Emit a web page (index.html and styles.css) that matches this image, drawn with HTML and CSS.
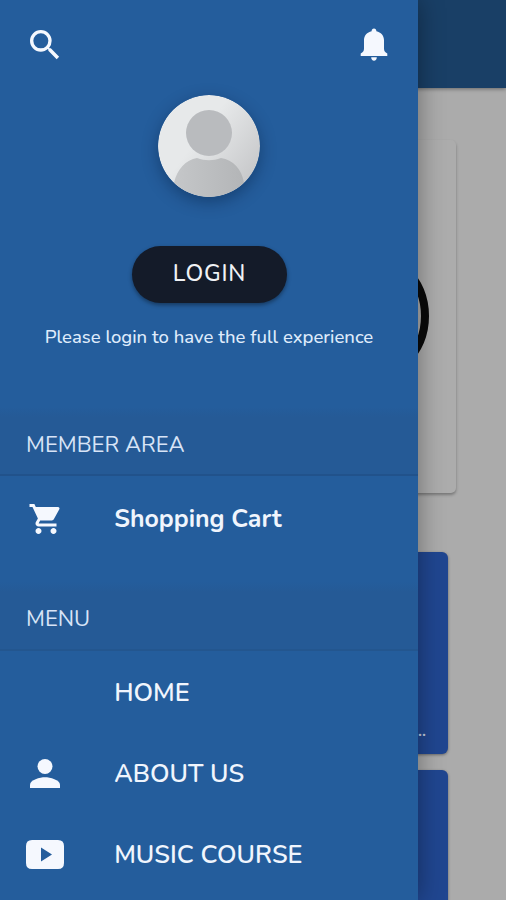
FILE: index.html
```html
<!DOCTYPE html>
<html lang="en">
<head>
<meta charset="utf-8">
<title>Menu</title>
<link rel="stylesheet" href="styles.css">
</head>
<body>
<div class="app">
  <main class="page">
    <header class="topbar"></header>
    <section class="hero-card"><div class="ring"></div></section>
    <section class="tile tile-first"><span class="more">...</span></section>
    <section class="tile"></section>
  </main>
  <aside class="drawer">
    <div class="actions">
      <svg class="icon-search" viewBox="0 0 24 24"><path d="M15.5 14h-.79l-.28-.27A6.47 6.47 0 0 0 16 9.5 6.5 6.5 0 1 0 9.5 16c1.61 0 3.09-.59 4.23-1.57l.27.28v.79l5 4.99L20.49 19l-4.99-5zm-6 0a4.5 4.5 0 1 1 0-9 4.5 4.5 0 0 1 0 9z"/></svg>
      <svg class="icon-bell" viewBox="0 0 28 34"><path d="M14 0.500c1.500 0 2.300 1 2.400 2.700 4.500 1 7.600 4.300 7.600 8.800v8.500c0 2.500 1 3.700 3.300 5V28H.7v-2.500C3 24.200 4 23 4 20.500V12c0-4.500 3.100-7.800 7.600-8.800.1-1.700.9-2.700 2.400-2.700z"/><path d="M11.200 29.300h5.600c0 2-1.200 3.500-2.800 3.500s-2.800-1.500-2.800-3.500z"/></svg>
    </div>
    <svg class="avatar" viewBox="0 0 102 102">
      <defs>
        <linearGradient id="disc" x1="0" y1="0" x2="1" y2=".75"><stop offset=".45" stop-color="#e7e9ea"/><stop offset="1" stop-color="#c6c7c9"/></linearGradient>
        <linearGradient id="body" x1="0" y1="0" x2="1" y2="0"><stop offset="0" stop-color="#c5c7c9"/><stop offset="1" stop-color="#b3b5b7"/></linearGradient>
        <clipPath id="round"><circle cx="51" cy="51" r="51"/></clipPath>
      </defs>
      <g clip-path="url(#round)">
        <rect width="102" height="102" fill="url(#disc)"/>
        <circle cx="51" cy="38" r="23" fill="#b9bbbe"/>
        <path d="M16 102V88C19 74 28 65 39 63c8 3 16 3 24 0 12 2 21 11 23 25v14z" fill="url(#body)"/>
      </g>
    </svg>
    <button class="login">LOGIN</button>
    <p class="hint">Please login to have the full experience</p>
    <h2 class="heading">MEMBER AREA</h2>
    <nav class="group group-member">
      <a class="item"><span class="slot"><svg class="icon-cart" viewBox="0 0 24 24"><path d="M7 18c-1.100 0-1.990.9-1.990 2S5.900 22 7 22s2-.9 2-2-.9-2-2-2zM1 2v2h2l3.600 7.590-1.350 2.450c-.16.280-.25.610-.25.960 0 1.100.9 2 2 2h12v-2H7.420c-.14 0-.25-.11-.25-.25l.03-.12.900-1.630h7.450c.75 0 1.410-.41 1.750-1.030l3.580-6.490A1 1 0 0 0 20 4H5.210l-.94-2H1zm16 16c-1.100 0-1.990.9-1.990 2s.89 2 1.990 2 2-.9 2-2-.9-2-2-2z"/></svg></span><span class="label cart">Shopping Cart</span></a>
    </nav>
    <h2 class="heading heading-menu">MENU</h2>
    <nav class="group group-menu">
      <a class="item"><span class="slot"></span><span class="label">HOME</span></a>
      <a class="item"><span class="slot"><svg class="icon-person" viewBox="0 0 30 30"><circle cx="15" cy="7.500" r="7.500"/><path d="M0 29v-3.200c0-5 10-7.600 15-7.600s15 2.600 15 7.600V29z"/></svg></span><span class="label">ABOUT US</span></a>
      <a class="item"><span class="slot"><svg class="icon-video" viewBox="0 0 38 29"><path fill-rule="evenodd" d="M6 0h26q6 0 6 6v17q0 6-6 6H6q-6 0-6-6V6q0-6 6-6zM15 7.500v14L26 14.500z"/></svg></span><span class="label">MUSIC COURSE</span></a>
    </nav>
  </aside>
</div>
</body>
</html>
```
FILE: styles.css
```css
* { box-sizing: border-box; }
body { margin: 0; font-family: Nunito, Lato, "Open Sans", sans-serif; }
svg { display: block; fill: #f5f8fe; }
.app { position: relative; width: 506px; height: 900px; overflow: hidden; background: #ababab; }
.page { height: 900px; display: flex; flex-direction: column; }
.topbar { flex: none; height: 88px; background: #193f66; box-shadow: 0 1px 4px rgba(0,0,0,.4); }
.hero-card { flex: none; width: 406px; height: 353px; margin: 52px 0 59px 50px; border-radius: 5px; background: #acacac; box-shadow: 0 2px 3px rgba(0,0,0,.3); padding: 106px 0 0 239px; }
.ring { width: 140px; height: 140px; border: 8px solid #0b0b0b; border-radius: 50%; }
.tile { flex: none; width: 390px; height: 202px; margin: 0 0 16px 58px; border-radius: 6px; background: #204690; box-shadow: 0 1px 3px rgba(0,0,0,.4); }
.tile-first { display: flex; align-items: flex-end; justify-content: flex-end; padding: 0 22px 13px 0; }
.more { color: #c4cedf; font-size: 16px; font-weight: 700; line-height: 20px; }
.drawer { position: absolute; top: 0; left: 0; width: 418px; height: 900px; display: flex; flex-direction: column; align-items: center; background: #245d9c; box-shadow: 0 0 24px rgba(0,0,0,.38); }
.actions { flex: none; width: 100%; height: 95px; display: flex; justify-content: space-between; padding: 28px 30px 0 25px; }
.icon-search { width: 40px; height: 40px; margin-top: -3px; }
.icon-bell { width: 28px; height: 34px; }
.avatar { flex: none; width: 102px; height: 102px; border-radius: 50%; box-shadow: 0 5px 16px rgba(0,20,50,.38); }
.login { flex: none; width: 155px; height: 57px; margin: 49px 0 0; padding: 0 0 2px 1px; border: 0; border-radius: 29px; background: #141b29; box-shadow: 0 2px 4px rgba(0,0,0,.4); color: #f0f2f5; font: 500 23px/1 Nunito, Lato, sans-serif; letter-spacing: .8px; }
.hint { flex: none; margin: 21px 0 57px; font-size: 18.500px; font-weight: 500; line-height: 26px; color: #dfebfb; white-space: nowrap; }
.heading { flex: none; width: 100%; height: 69px; margin: 0; padding: 9px 26px 0; display: flex; align-items: center; background: linear-gradient(#245d9c, #255a96 15%); border-bottom: 2px solid #21528b; color: #d8e4f6; font-size: 22.100px; font-weight: 400; }
.heading-menu { padding-top: 7px; border-bottom-color: #23568f; }
.group { flex: none; width: 100%; }
.group-member { height: 106px; padding-top: 2px; }
.group-menu { padding-top: 1px; }
.item { height: 81px; display: grid; grid-template-columns: 88.200px 1fr; align-items: center; padding-left: 26px; }
.slot { width: 38px; display: flex; justify-content: center; }
.label { color: #f0f5fd; font-size: 25.200px; font-weight: 600; line-height: 32px; white-space: nowrap; }
.cart { font-weight: 700; font-size: 24.900px; }
.icon-cart { width: 36px; height: 36px; margin-left: 2px; }
.icon-person { width: 30px; height: 30px; }
.icon-video { width: 38px; height: 29px; }
```
